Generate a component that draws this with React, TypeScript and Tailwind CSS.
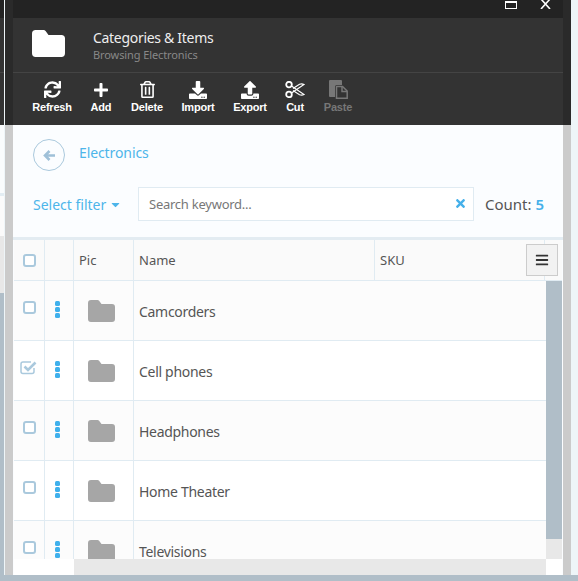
import React from 'react';
import { FaSync, FaPlus, FaRegTrashAlt, FaDownload, FaUpload, FaCaretDown, FaTimes, FaBars } from 'react-icons/fa';

const Folder: React.FC<{ className: string }> = ({ className }) => (
  <svg viewBox="0 0 27 22" className={className} fill="currentColor">
    <path d="M3 0h6.5a2 2 0 0 1 1.6.8L13.5 4H24a3 3 0 0 1 3 3v12a3 3 0 0 1-3 3H3a3 3 0 0 1-3-3V3a3 3 0 0 1 3-3z" />
  </svg>
);

// outlined scissors, the package one is solid
const Scissors = () => (
  <svg viewBox="0 0 20 17" className="h-[17px] w-[20px]" fill="none" stroke="currentColor" strokeWidth="1.5">
    <circle cx="4" cy="3.6" r="2.8" strokeWidth="1.8" />
    <circle cx="4" cy="13.4" r="2.8" strokeWidth="1.8" />
    <path d="M6.5 5l12.5 8.5c-1.5.8-3 .8-4.5.2L8 9.5" strokeWidth="1.2" />
    <path d="M6.5 12l12.5-8.5c-1.5-.8-3-.8-4.5-.2L8 7.5" strokeWidth="1.2" />
  </svg>
);

const Paste = () => (
  <svg viewBox="0 0 19 19" className="h-[19px] w-[19px]" fill="currentColor">
    <path d="M1 0h11a1 1 0 0 1 1 1v4H8a2 2 0 0 0-2 2v10H1a1 1 0 0 1-1-1V1a1 1 0 0 1 1-1z" />
    <path d="M8 6.500h5.500L18.200 11v7.200H7.500V7a.5.500 0 0 1 .5-.5z" fill="none" stroke="currentColor" strokeWidth="1.500" />
    <path d="M13 6.500V11.500h5" fill="none" stroke="currentColor" strokeWidth="1.500" />
  </svg>
);

const CheckedBox = () => (
  <svg viewBox="0 0 17 15" className="ml-[-1px] mt-[-1px] h-[15px] w-[17px] text-[#aac9dd]" fill="none" stroke="currentColor">
    <path d="M14 8v3.500a2 2 0 0 1-2 2H3a2 2 0 0 1-2-2V4a2 2 0 0 1 2-2h8" strokeWidth="1.500" />
    <path d="M4.500 6.500L8 10l7.500-7.500" strokeWidth="2.600" />
  </svg>
);

// heavy back arrow
const BackArrow = () => (
  <svg viewBox="0 0 12 11" className="h-[11px] w-[12px]" fill="none" stroke="currentColor" strokeWidth="2.6">
    <path d="M6.500 1L2 5.500l4.500 4.500M2.500 5.500H12" />
  </svg>
);

const tools = [
  { label: 'Refresh', icon: <FaSync size={17} />, width: 'w-[48px]' },
  { label: 'Add', icon: <FaPlus size={16} />, width: 'w-[50px]' },
  { label: 'Delete', icon: <FaRegTrashAlt size={17} />, width: 'w-[42px]' },
  { label: 'Import', icon: <FaDownload size={18} />, width: 'w-[60px]' },
  { label: 'Export', icon: <FaUpload size={18} />, width: 'w-[44px]' },
  { label: 'Cut', icon: <Scissors />, width: 'w-[46px]' },
  { label: 'Paste', icon: <Paste />, width: 'w-[40px]', disabled: true },
];

const rows = [
  { name: 'Camcorders' },
  { name: 'Cell phones', checked: true },
  { name: 'Headphones' },
  { name: 'Home Theater' },
  { name: 'Televisions' },
];

const Checkbox = () => <div className="h-[13px] w-[13px] rounded-[3px] border-2 border-[#aac9dd] bg-white" />;

const Row: React.FC<{ name: string; checked?: boolean; odd: boolean }> = ({ name, checked, odd }) => (
  <div className={`flex h-[60px] shrink-0 border-b border-[#e0ebf2] ${odd ? 'bg-[#fcfcfc]' : 'bg-white'}`}>
    <div className="flex w-[31px] justify-center border-r border-[#e0ebf2] pt-[20px]">
      {checked ? <CheckedBox /> : <Checkbox />}
    </div>
    <div className="flex w-[29px] justify-center border-r border-[#e0ebf2] pr-[3px] pt-[20px]">
      <div className="flex flex-col gap-[1px]">
        <div className="h-[5px] w-[5px] rounded-[1.5px] bg-[#3fb0ec]" />
        <div className="h-[5px] w-[5px] rounded-[1.5px] bg-[#3fb0ec]" />
        <div className="h-[5px] w-[5px] rounded-[1.5px] bg-[#3fb0ec]" />
      </div>
    </div>
    <div className="w-[60px] border-r border-[#e0ebf2] pl-[14px] pt-[19px]">
      <Folder className="h-[22px] w-[27px] text-[#a6a6a6]" />
    </div>
    <div className="pl-[5px] pt-[21px] text-[14px] leading-[20px] tracking-[-0.3px] text-[#555]">{name}</div>
  </div>
);

export default function App() {
  return (
    <div className="flex h-[581px] w-[578px] flex-col overflow-hidden bg-[#eef5f8] font-['Noto_Sans',sans-serif]">
      <div className="flex min-h-0 flex-1">
        {/* page behind the modal */}
        <div className="flex w-[5px] flex-col border-r border-[#eef5f8]">
          <div className="h-[18px] bg-[#232323]" />
          <div className="h-[55px] border-b border-[#444] bg-[#333]" />
          <div className="h-[52px] bg-[#333]" />
          <div className="h-[68px] bg-[#fafcfd]" />
          <div className="h-[43px] border-t-[3px] border-[#e3edf3] bg-[#fbfbfb]" />
          <div className="h-[57px] bg-[#e8e8e8]" />
          <div className="flex-1 bg-[#b0bec8]" />
        </div>
        <div className="flex w-[8px] flex-col">
          <div className="h-[125px] bg-[#2a2a2a]" />
          <div className="flex-1 bg-[#cbcbcb]" />
        </div>

        {/* modal */}
        <div className="flex w-[550px] flex-col bg-[#fbfdff]">
          <div className="flex h-[18px] items-start justify-end overflow-hidden bg-[#232323] pr-[12px]">
            <div className="mr-[23px] mt-[1px] h-[8px] w-[12px] border border-t-2 border-white" />
            <svg viewBox="0 0 11 9" className="h-[9px] w-[11px]" stroke="white" strokeWidth="1.6" fill="none">
              <path d="M1 -1l9 10M10 -1l-9 10" />
            </svg>
          </div>
          <div className="flex h-[55px] items-center border-b border-[#444] bg-[#333] pl-[19px]">
            <Folder className="mb-[3px] h-[27px] w-[33px] text-white" />
            <div className="ml-[28px]">
              <div className="mt-[-1px] text-[14px] leading-[18px] tracking-[-0.3px] text-[#eee]">Categories &amp; Items</div>
              <div className="mt-[1px] text-[11px] leading-[13px] tracking-[-0.1px] text-[#888]">Browsing Electronics</div>
            </div>
          </div>
          <div className="flex h-[52px] bg-[#333] pl-[15px] pt-[7px] font-['Liberation_Sans',sans-serif]">
            {tools.map((t) => (
              <div key={t.label} className={`flex ${t.width} flex-col items-center ${t.disabled ? 'text-[#777]' : 'text-white'}`}>
                <div className="flex h-[19px] items-center">{t.icon}</div>
                <div className="mt-[1px] text-[11px] font-bold leading-[14px] tracking-[-0.2px]">{t.label}</div>
              </div>
            ))}
          </div>

          <div className="flex items-center pl-[20px] pt-[14px]">
            <div className="flex h-[32px] w-[32px] items-center justify-center rounded-full border border-[#aac9dd] text-[#9fc0d8]">
              <BackArrow />
            </div>
            <span className="mb-[5px] ml-[14px] text-[14px] tracking-[-0.1px] text-[#4db5ea]">Electronics</span>
          </div>

          <div className="mt-[16px] flex h-[34px] items-center pl-[20px]">
            <div className="flex w-[105px] items-center pt-[1px] text-[14px] text-[#4db5ea]">
              Select filter
              <FaCaretDown className="ml-[3px]" size={13} />
            </div>
            <div className="flex h-[34px] w-[336px] items-center justify-between border border-[#e0ebf2] bg-white pl-[10px] pr-[6px] pt-[1px] text-[13px] tracking-[-0.25px] text-[#777]">
              Search keyword...
              <FaTimes className="mb-[2px] text-[#45b0ea]" size={13} />
            </div>
            <div className="ml-[11px] pt-[1px] text-[15px] text-[#555]">
              Count: <span className="font-semibold text-[#45b0ea]">5</span>
            </div>
          </div>

          {/* grid */}
          <div className="mt-[16px] flex min-h-0 flex-1 flex-col border-t-[3px] border-[#e3ecf2] pl-[1px] pr-px">
            <div className="relative flex h-[41px] shrink-0 border-b border-[#e0ebf2] bg-[#fafafa] text-[13px] leading-[41px] text-[#555]">
              <div className="flex w-[31px] items-center justify-center border-r border-[#e0ebf2]"><Checkbox /></div>
              <div className="w-[29px] border-r border-[#e0ebf2]" />
              <div className="w-[60px] border-r border-[#e0ebf2] pl-[5px]">Pic</div>
              <div className="w-[241px] border-r border-[#e0ebf2] pl-[5px]">Name</div>
              <div className="w-[170px] border-r border-[#e0ebf2] pl-[5px]">SKU</div>
              <div className="absolute right-[4px] top-[4px] flex h-[32px] w-[32px] items-center justify-center border border-[#ccc] bg-[#f2f2f2] text-[#333]">
                <FaBars size={14} />
              </div>
            </div>
            <div className="flex min-h-0 flex-1">
              <div className="flex w-[532px] flex-col">
                <div className="flex h-[278px] flex-col overflow-hidden">
                  {rows.map((r, i) => (
                    <Row key={r.name} name={r.name} checked={r.checked} odd={i % 2 === 0} />
                  ))}
                </div>
                <div className="flex h-[16px]">
                  <div className="w-[60px] bg-white" />
                  <div className="flex-1 bg-[#e8e8e8]" />
                </div>
              </div>
              <div className="flex w-[16px] flex-col">
                <div className="h-[258px] bg-[#b0bec8]" />
                <div className="h-[20px] bg-[#e8e8e8]" />
                <div className="h-[16px] bg-white" />
              </div>
            </div>
          </div>
        </div>

        <div className="flex w-[8px] flex-col">
          <div className="h-[125px] bg-[#2a2a2a]" />
          <div className="flex-1 bg-[#cbcbcb]" />
        </div>
        <div className="flex-1" />
      </div>
      <div className="h-[6px] bg-[#b0bec8]" />
    </div>
  );
}
